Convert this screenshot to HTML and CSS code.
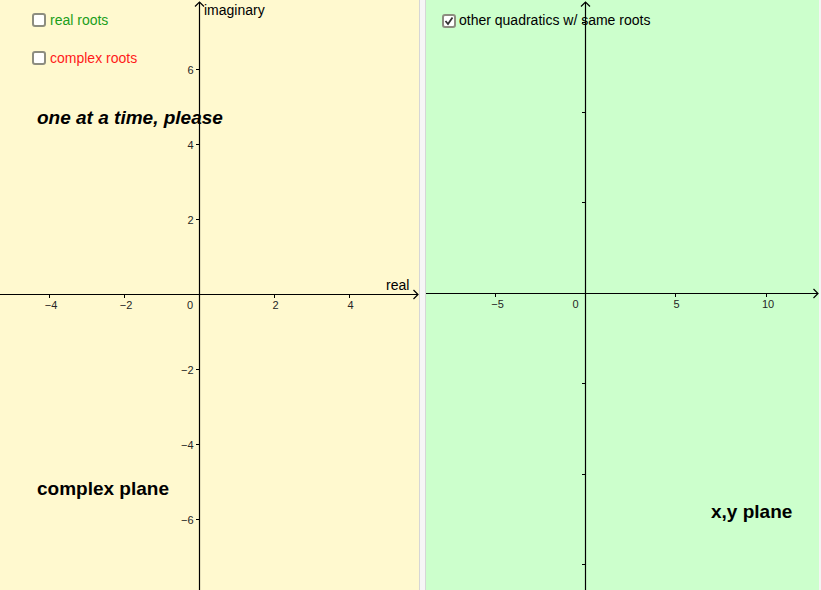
FILE: index.html
```html
<!DOCTYPE html>
<html>
<head>
<meta charset="utf-8">
<link rel="stylesheet" href="styles.css">
</head>
<body>
<div class="app">
  <div class="panel panel-left">
    <svg class="axes" width="419" height="590" viewBox="0 0 419 590">
      <g class="axis-lines">
        <line x1="0" y1="294.5" x2="418" y2="294.5"/>
        <line x1="199.5" y1="2" x2="199.5" y2="590"/>
        <polyline points="413.5,290 418,294.5 413.5,299"/>
        <polyline points="195,6.5 199.5,2 204,6.5"/>
      </g>
      <g class="ticks">
        <line x1="49.5" y1="294.5" x2="49.5" y2="298"/>
        <line x1="124.5" y1="294.5" x2="124.5" y2="298"/>
        <line x1="274.5" y1="294.5" x2="274.5" y2="298"/>
        <line x1="349.5" y1="294.5" x2="349.5" y2="298"/>
        <line x1="196" y1="69.5" x2="199.5" y2="69.5"/>
        <line x1="196" y1="144.5" x2="199.5" y2="144.5"/>
        <line x1="196" y1="219.5" x2="199.5" y2="219.5"/>
        <line x1="196" y1="369.5" x2="199.5" y2="369.5"/>
        <line x1="196" y1="444.5" x2="199.5" y2="444.5"/>
        <line x1="196" y1="519.5" x2="199.5" y2="519.5"/>
      </g>
      <g class="tick-labels">
        <text x="51" y="309" text-anchor="middle">−4</text>
        <text x="126" y="309" text-anchor="middle">−2</text>
        <text x="190" y="309" text-anchor="middle">0</text>
        <text x="275.5" y="309" text-anchor="middle">2</text>
        <text x="350.5" y="309" text-anchor="middle">4</text>
        <text x="193.5" y="73.5" text-anchor="end">6</text>
        <text x="193.5" y="148.5" text-anchor="end">4</text>
        <text x="193.5" y="223.5" text-anchor="end">2</text>
        <text x="193.5" y="373.5" text-anchor="end">−2</text>
        <text x="193.5" y="448.5" text-anchor="end">−4</text>
        <text x="193.5" y="523.5" text-anchor="end">−6</text>
      </g>
      <text class="axis-name" x="386" y="290">real</text>
      <text class="axis-name" x="204" y="15">imaginary</text>
    </svg>
    <label class="check check-real"><span class="box"></span><span class="check-text">real roots</span></label>
    <label class="check check-complex"><span class="box"></span><span class="check-text">complex roots</span></label>
    <div class="note note-one">one at a time, please</div>
    <div class="note note-plane">complex plane</div>
  </div>
  <div class="divider"></div>
  <div class="panel panel-right">
    <svg class="axes" width="393" height="590" viewBox="0 0 393 590">
      <g class="axis-lines">
        <line x1="0" y1="293.5" x2="392" y2="293.5"/>
        <line x1="159.5" y1="2" x2="159.5" y2="590"/>
        <polyline points="387.5,289 392,293.5 387.5,298"/>
        <polyline points="155,6.5 159.5,2 164,6.5"/>
      </g>
      <g class="ticks">
        <line x1="69.5" y1="293.5" x2="69.5" y2="297"/>
        <line x1="249.5" y1="293.5" x2="249.5" y2="297"/>
        <line x1="340.5" y1="293.5" x2="340.5" y2="297"/>
        <line x1="156" y1="22.5" x2="159.5" y2="22.5"/>
        <line x1="156" y1="112.5" x2="159.5" y2="112.5"/>
        <line x1="156" y1="202.5" x2="159.5" y2="202.5"/>
        <line x1="156" y1="383.5" x2="159.5" y2="383.5"/>
        <line x1="156" y1="474.5" x2="159.5" y2="474.5"/>
        <line x1="156" y1="564.5" x2="159.5" y2="564.5"/>
      </g>
      <g class="tick-labels">
        <text x="71.5" y="308" text-anchor="middle">−5</text>
        <text x="149.5" y="308" text-anchor="middle">0</text>
        <text x="250.5" y="308" text-anchor="middle">5</text>
        <text x="342" y="308" text-anchor="middle">10</text>
      </g>
    </svg>
    <label class="check check-other"><span class="box box-checked"><svg class="tick-mark" width="10" height="10" viewBox="0 0 10 10"><polyline points="1.5,5 4,8 8.5,1.5"/></svg></span><span class="check-text">other quadratics w/ same roots</span></label>
    <div class="note note-xy">x,y plane</div>
  </div>
  <div class="edge"></div>
</div>
</body>
</html>
```
FILE: styles.css
```css
html, body {
  margin: 0;
  padding: 0;
  background: #ffffff;
}
body {
  width: 821px;
  height: 590px;
  overflow: hidden;
  font-family: "Liberation Sans", Arial, sans-serif;
}
.app {
  display: flex;
  width: 821px;
  height: 590px;
}
.panel {
  position: relative;
  height: 590px;
  overflow: hidden;
}
.panel-left {
  width: 419px;
  background: #fff9cf;
}
.panel-right {
  width: 393px;
  background: #ccffcc;
}
.divider {
  width: 5px;
  height: 590px;
  background: #f6f6f6;
  border-left: 1px solid #d6d6d6;
  border-right: 1px solid #d6d6d6;
}
.edge {
  width: 2px;
  height: 590px;
  background: #f4f4f4;
}
.axes {
  display: block;
  position: absolute;
  left: 0;
  top: 0;
}
.axis-lines line,
.axis-lines polyline {
  stroke: #000;
  stroke-width: 1.2;
  fill: none;
}
.ticks line {
  stroke: #000;
  stroke-width: 1;
}
.tick-labels text {
  font-family: "Liberation Sans", Arial, sans-serif;
  font-size: 11px;
  fill: #262626;
}
.axis-name {
  font-family: "Liberation Sans", Arial, sans-serif;
  font-size: 14px;
  fill: #000;
}
.check {
  position: absolute;
  display: flex;
  align-items: flex-start;
  font-size: 14px;
  line-height: 14px;
}
.box {
  box-sizing: border-box;
  width: 14px;
  height: 14px;
  border: 2px solid #8d8d80;
  border-radius: 3px;
  background: #ffffff;
  margin-right: 4px;
  display: flex;
  align-items: center;
  justify-content: center;
}
.tick-mark polyline {
  fill: none;
  stroke: #333;
  stroke-width: 1.8;
}
.check-text {
  display: block;
}
.check-real {
  left: 32px;
  top: 13px;
  color: #1a9e1a;
}
.check-complex {
  left: 32px;
  top: 51px;
  color: #ff1a1a;
}
.check-other {
  left: 16px;
  top: 14px;
  color: #000;
}
.check-other .box {
  margin-right: 3px;
}
.check-other .check-text {
  margin-top: -1px;
}
.note {
  position: absolute;
  font-size: 19px;
  line-height: 19px;
  font-weight: bold;
  color: #000;
  white-space: nowrap;
}
.note-one {
  left: 37px;
  top: 108px;
  font-style: italic;
}
.note-plane {
  left: 37px;
  top: 479px;
}
.note-xy {
  left: 285px;
  top: 502px;
}
```
